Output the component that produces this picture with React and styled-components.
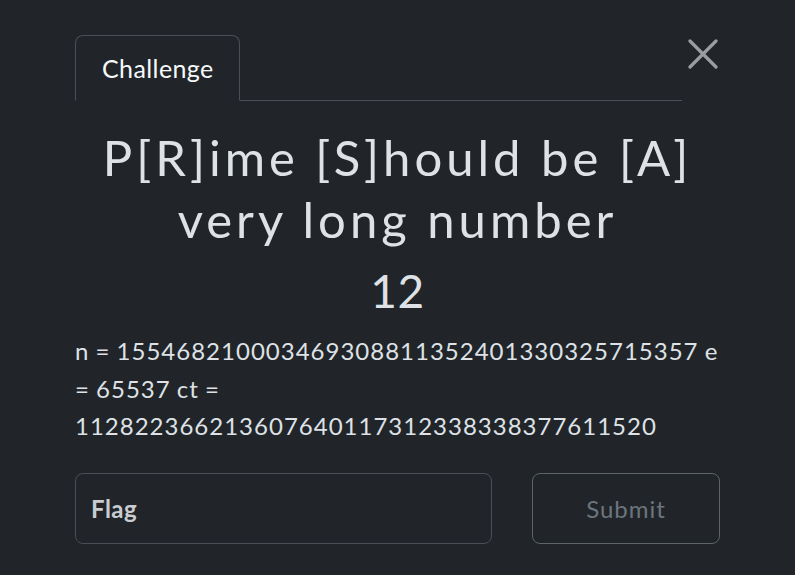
import React from 'react';
import styled, { createGlobalStyle } from 'styled-components';

const GlobalStyle = createGlobalStyle`
  html, body {
    margin: 0;
    padding: 0;
    background: #212529;
  }
  body {
    font-family: Lato, "Open Sans", "Liberation Sans", sans-serif;
    color: #dee2e6;
  }
`;

// --- Layout ---

const Page = styled.div`
  width: 795px;
  height: 575px;
  background: #212529;
  box-sizing: border-box;
  padding: 35px 75px 0 75px;
  overflow: hidden;
`;

const Header = styled.div`
  display: flex;
  align-items: flex-start;
  gap: 4px;
`;

const TabBar = styled.div`
  flex: 1;
  display: flex;
  border-bottom: 1px solid #4a4f55;
`;

const Tab = styled.button`
  background: #212529;
  color: #f8f9fa;
  font-family: inherit;
  font-size: 25px;
  letter-spacing: 0.4px;
  line-height: 1;
  height: 66px;
  padding: 0 25px 0 26px;
  margin-bottom: -1px;
  border: 1px solid #4a4f55;
  border-bottom-color: ${p => (p.$active ? '#212529' : '#4a4f55')};
  border-radius: 8px 8px 0 0;
  cursor: pointer;
`;

const CloseButton = styled.button`
  background: none;
  border: none;
  padding: 0;
  width: 34px;
  height: 38px;
  display: flex;
  align-items: center;
  justify-content: center;
  cursor: pointer;
`;

const Body = styled.div`
  display: flex;
  flex-direction: column;
`;

const Title = styled.h2`
  margin: 25px 0 0;
  font-size: 49px;
  letter-spacing: 4px;
  font-weight: 400;
  line-height: 62px;
  text-align: center;
  color: #dee2e6;
`;

const Value = styled.h3`
  margin: 13px 0 0;
  font-size: 46px;
  letter-spacing: 0.5px;
  font-weight: 400;
  line-height: 1.2;
  text-align: center;
  color: #dee2e6;
`;

const Description = styled.p`
  margin: 14px 0 0;
  font-size: 24px;
  letter-spacing: 1px;
  word-spacing: -1px;
  line-height: 37.5px;
  color: #dee2e6;
  word-break: break-word;
`;

const SubmitRow = styled.form`
  display: grid;
  grid-template-columns: 417px 188px;
  justify-content: space-between;
  margin-top: 28px;
`;

const FlagInput = styled.input`
  height: 71px;
  box-sizing: border-box;
  background: #212529;
  border: 1px solid #4a4f55;
  border-radius: 8px;
  padding: 0 15px;
  font-family: inherit;
  font-size: 24px;
  letter-spacing: 0.5px;
  color: #dee2e6;
  outline: none;

  &::placeholder {
    color: #c9ccd0;
    font-weight: 700;
  }
`;

const SubmitButton = styled.button`
  height: 71px;
  box-sizing: border-box;
  background: transparent;
  border: 1px solid #5c6468;
  border-radius: 8px;
  font-family: inherit;
  font-size: 24px;
  letter-spacing: 1px;
  color: #6c757d;
  cursor: pointer;
`;

const CloseIcon = () => (
  <svg width="30" height="30" viewBox="0 0 30 30">
    <path
      d="M2 2 L28 28 M28 2 L2 28"
      stroke="#9a9da1"
      strokeWidth="3.2"
      strokeLinecap="round"
      fill="none"
    />
  </svg>
);

export default function App() {
  return (
    <Page>
      <GlobalStyle />
      <Header>
        <TabBar>
          <Tab $active>Challenge</Tab>
        </TabBar>
        <CloseButton aria-label="Close">
          <CloseIcon />
        </CloseButton>
      </Header>
      <Body>
        <Title>P[R]ime [S]hould be [A] very long number</Title>
        <Value>12</Value>
        <Description>
          n = 155468210003469308811352401330325715357 e = 65537 ct =
          112822366213607640117312338338377611520
        </Description>
        <SubmitRow onSubmit={e => e.preventDefault()}>
          <FlagInput placeholder="Flag" />
          <SubmitButton type="submit">Submit</SubmitButton>
        </SubmitRow>
      </Body>
    </Page>
  );
}
